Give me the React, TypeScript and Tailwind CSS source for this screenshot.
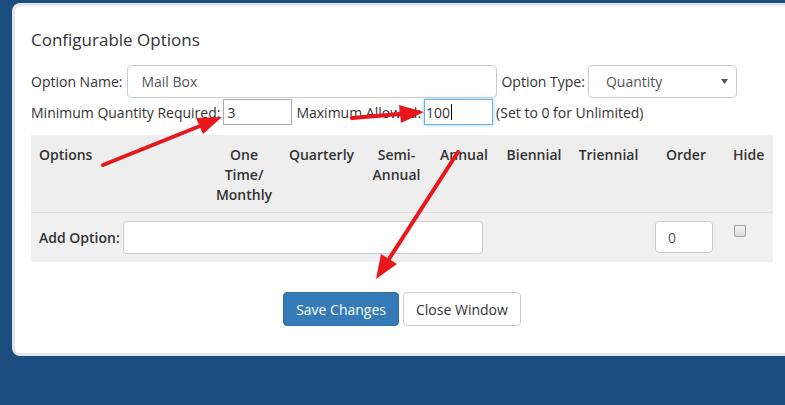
export default function App() {
  const cols =
    "grid grid-cols-[177px_72px_83px_67px_68px_72px_77px_78px_48px]";

  return (
    <div className="relative w-[785px] h-[405px] overflow-hidden bg-[#1c4d7f] pt-[3px] pl-[12px] font-['Open_Sans',sans-serif] text-[14px] text-[#333]">
      <div className="w-[780px] h-[353px] rounded-[8px] border-[3px] border-[#e1e5e8] bg-white px-4 pt-[22px]">
        <h2 className="text-[17px] leading-[24px] text-[#333]">Configurable Options</h2>

        {/* option name / type */}
        <div className="mt-[13px] flex h-[33px] items-center">
          <span>Option Name:</span>
          <div className="ml-[5px] flex h-[33px] w-[370px] items-center rounded-[4px] border border-[#ccc] px-[13px] text-[#555]">
            Mail Box
          </div>
          <span className="ml-[4px]">Option Type:</span>
          <div className="ml-[3px] flex h-[33px] w-[149px] items-center justify-between rounded-[4px] border border-[#ccc] pl-[17px] pr-[8px] text-[#555]">
            Quantity
            <svg width="7" height="5" viewBox="0 0 7 5">
              <path d="M0 0h7L3.5 5z" fill="#555" />
            </svg>
          </div>
        </div>

        {/* quantities */}
        <div className="mt-[1px] flex h-[26px] items-center">
          <span>Minimum Quantity Required:</span>
          <div className="ml-[3px] flex h-[26px] w-[69px] items-center border border-[#a9a9a9] px-[3px]">3</div>
          <span className="ml-[4px]">Maximum Allowed:</span>
          <div className="ml-[3px] flex h-[26px] w-[69px] items-center border border-[#66afe9] px-[1px] shadow-[0_0_4px_rgba(102,175,233,0.6)]">
            100<span className="ml-[1px] inline-block h-[16px] w-px bg-black" />
          </div>
          <span className="ml-[3px]">(Set to 0 for Unlimited)</span>
        </div>

        {/* table */}
        <div className="mt-[10px] w-[742px] bg-[#eeeeee]">
          <div className={`${cols} border-b border-[#dddddd] pt-[10px] pb-[7px] font-semibold leading-[20px]`}>
            <div className="pl-2">Options</div>
            <div className="text-center">
              One
              <br />
              Time/
              <br />
              Monthly
            </div>
            <div className="text-center">Quarterly</div>
            <div className="text-center">
              Semi-
              <br />
              Annual
            </div>
            <div className="text-center">Annual</div>
            <div className="text-center">Biennial</div>
            <div className="text-center">Triennial</div>
            <div className="text-center">Order</div>
            <div className="pl-2">Hide</div>
          </div>
          <div className={`${cols} bg-[#f0f0f0] py-2`}>
            <div className="col-span-6 flex items-center pl-2">
              <span className="font-semibold">Add Option:</span>
              <div className="ml-[3px] h-[33px] w-[360px] rounded-[4px] border border-[#ccc] bg-white" />
            </div>
            <div />
            <div className="pl-2">
              <div className="flex h-[32px] w-[58px] items-center rounded-[4px] border border-[#ccc] bg-white px-[12px] text-[#555]">
                0
              </div>
            </div>
            <div className="pl-[9px] pt-[4px]">
              <div className="h-[12px] w-[12px] rounded-[2px] border border-[#a0a0a0] bg-gradient-to-b from-[#f2f2f2] to-[#dcdcdc]" />
            </div>
          </div>
        </div>

        {/* buttons */}
        <div className="mt-[30px] flex justify-center gap-[4px]">
          <button className="h-[34px] rounded-[4px] border border-[#2e6da4] bg-[#337ab7] px-3 text-white">
            Save Changes
          </button>
          <button className="h-[34px] rounded-[4px] border border-[#ccc] bg-white px-3 text-[#333]">
            Close Window
          </button>
        </div>
      </div>

      {/* annotation arrows */}
      <svg className="pointer-events-none absolute left-0 top-0" width="785" height="405">
        <g stroke="#e8171b" strokeWidth="4" strokeLinecap="round">
          <line x1="103" y1="165" x2="200" y2="126" />
          <line x1="352" y1="118" x2="400" y2="114" />
          <line x1="458" y1="152" x2="389" y2="259" />
        </g>
        <g fill="#e8171b">
          <polygon points="222,117 203,134 196,118" />
          <polygon points="424,112 401,123 399,105" />
          <polygon points="376,279 397,264 381,254" />
        </g>
      </svg>
    </div>
  );
}
